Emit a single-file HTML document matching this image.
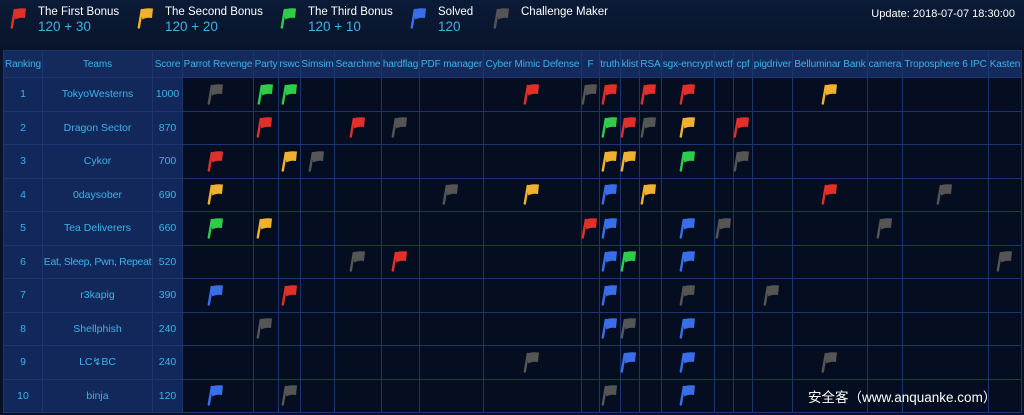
<!DOCTYPE html>
<html><head><meta charset="utf-8"><style>
*{margin:0;padding:0;box-sizing:border-box}
body{width:1024px;height:415px;overflow:hidden;background:linear-gradient(#0b1a36,#07142b 50px,#061128);font-family:"Liberation Sans","Noto Sans CJK SC",sans-serif;position:relative}
.leg{position:absolute;top:6px;color:#fff;font-size:11.5px}
.leg b{display:block;font-weight:normal;color:#3bb4ea;font-size:13.5px;margin-top:1px}
.leg svg{position:absolute;left:-30px;top:1px}
#upd{position:absolute;right:9px;top:8px;color:#fff;font-size:11px}
table{position:absolute;left:3px;top:50px;border-collapse:collapse;table-layout:fixed;width:1018px}
td{border:1px solid #1d3670;color:#3bb4ea;font-size:10.5px;text-align:center;height:33.5px;white-space:nowrap;overflow:hidden;background:#040e20;padding:0}
tr.h td{height:27px;background:#142a5c;font-size:10px;letter-spacing:-0.1px;overflow:visible}
td.l{background:#13285a;font-size:10.5px}
.f{position:absolute;width:20px;height:22px}
#wm{position:absolute;left:808px;top:386px;color:#fff;font-size:13.5px}
</style></head><body>
<svg width="0" height="0" style="position:absolute"><defs><symbol id="fl" viewBox="0 0 20 22"><path d="M3.8 20.5 L6.8 3" stroke="currentColor" stroke-width="2.4" stroke-linecap="round"/><path d="M5.5 2.8 Q11 0.5 18 1.5 L17 11 Q11.5 10 7.3 12.5 Z" fill="currentColor"/></symbol></defs></svg>
<div class="leg" style="left:38px"><svg width="20" height="22" style="color:#e0302a"><use href="#fl"/></svg>The First Bonus<b>120 + 30</b></div>
<div class="leg" style="left:165px"><svg width="20" height="22" style="color:#f0b030"><use href="#fl"/></svg>The Second Bonus<b>120 + 20</b></div>
<div class="leg" style="left:308px"><svg width="20" height="22" style="color:#2ecc4a"><use href="#fl"/></svg>The Third Bonus<b>120 + 10</b></div>
<div class="leg" style="left:438px"><svg width="20" height="22" style="color:#3a6ee8"><use href="#fl"/></svg>Solved<b>120</b></div>
<div class="leg" style="left:521px"><svg width="20" height="22" style="color:#555"><use href="#fl"/></svg>Challenge Maker</div>
<div id="upd">Update: 2018-07-07 18:30:00</div>
<table>
<colgroup><col style="width:39px"><col style="width:110px"><col style="width:30px"><col style="width:71px"><col style="width:25px"><col style="width:22px"><col style="width:34px"><col style="width:47px"><col style="width:38px"><col style="width:64px"><col style="width:98px"><col style="width:18px"><col style="width:21px"><col style="width:19px"><col style="width:22px"><col style="width:53px"><col style="width:19px"><col style="width:19px"><col style="width:40px"><col style="width:75px"><col style="width:35px"><col style="width:86px"><col style="width:33px"></colgroup>
<tr class="h"><td>Ranking</td><td>Teams</td><td>Score</td><td>Parrot Revenge</td><td>Party</td><td>rswc</td><td>Simsim</td><td>Searchme</td><td>hardflag</td><td>PDF manager</td><td>Cyber Mimic Defense</td><td>F</td><td>truth</td><td>klist</td><td>RSA</td><td>sgx-encrypt</td><td>wctf</td><td>cpf</td><td>pigdriver</td><td>Belluminar Bank</td><td>camera</td><td>Troposphere 6 IPC</td><td>Kasten</td></tr>
<tr><td class="l">1</td><td class="l">TokyoWesterns</td><td class="l">1000</td><td></td><td></td><td></td><td></td><td></td><td></td><td></td><td></td><td></td><td></td><td></td><td></td><td></td><td></td><td></td><td></td><td></td><td></td><td></td><td></td></tr>
<tr><td class="l">2</td><td class="l">Dragon Sector</td><td class="l">870</td><td></td><td></td><td></td><td></td><td></td><td></td><td></td><td></td><td></td><td></td><td></td><td></td><td></td><td></td><td></td><td></td><td></td><td></td><td></td><td></td></tr>
<tr><td class="l">3</td><td class="l">Cykor</td><td class="l">700</td><td></td><td></td><td></td><td></td><td></td><td></td><td></td><td></td><td></td><td></td><td></td><td></td><td></td><td></td><td></td><td></td><td></td><td></td><td></td><td></td></tr>
<tr><td class="l">4</td><td class="l">0daysober</td><td class="l">690</td><td></td><td></td><td></td><td></td><td></td><td></td><td></td><td></td><td></td><td></td><td></td><td></td><td></td><td></td><td></td><td></td><td></td><td></td><td></td><td></td></tr>
<tr><td class="l">5</td><td class="l">Tea Deliverers</td><td class="l">660</td><td></td><td></td><td></td><td></td><td></td><td></td><td></td><td></td><td></td><td></td><td></td><td></td><td></td><td></td><td></td><td></td><td></td><td></td><td></td><td></td></tr>
<tr><td class="l">6</td><td class="l" style="letter-spacing:-0.3px">Eat, Sleep, Pwn, Repeat</td><td class="l">520</td><td></td><td></td><td></td><td></td><td></td><td></td><td></td><td></td><td></td><td></td><td></td><td></td><td></td><td></td><td></td><td></td><td></td><td></td><td></td><td></td></tr>
<tr><td class="l">7</td><td class="l">r3kapig</td><td class="l">390</td><td></td><td></td><td></td><td></td><td></td><td></td><td></td><td></td><td></td><td></td><td></td><td></td><td></td><td></td><td></td><td></td><td></td><td></td><td></td><td></td></tr>
<tr><td class="l">8</td><td class="l">Shellphish</td><td class="l">240</td><td></td><td></td><td></td><td></td><td></td><td></td><td></td><td></td><td></td><td></td><td></td><td></td><td></td><td></td><td></td><td></td><td></td><td></td><td></td><td></td></tr>
<tr><td class="l">9</td><td class="l">LC↯BC</td><td class="l">240</td><td></td><td></td><td></td><td></td><td></td><td></td><td></td><td></td><td></td><td></td><td></td><td></td><td></td><td></td><td></td><td></td><td></td><td></td><td></td><td></td></tr>
<tr><td class="l">10</td><td class="l">binja</td><td class="l">120</td><td></td><td></td><td></td><td></td><td></td><td></td><td></td><td></td><td></td><td></td><td></td><td></td><td></td><td></td><td></td><td></td><td></td><td></td><td></td><td></td></tr>
</table>
<div id="flags"></div>
<div id="wm">安全客（www.anquanke.com）</div>
<script>
var C={r:"#e0302a",y:"#f0b030",g:"#2ecc4a",b:"#3a6ee8",k:"#555"};
var R=[
"k215 g265 g289 r531 k589 r609 r648 r687 y829",
"r264 r357 k399 g609 r628 k648 y687 r741",
"r215 y289 k316 y609 y628 g687 k741",
"y215 k450 y531 b609 y648 r829 k944",
"g215 y264 r589 b609 b687 k723 k884",
"k357 r399 b609 g628 b687 k1004",
"b215 r289 b609 k687 k771",
"k264 b609 k628 b687",
"k531 b628 b687 k829",
"b215 k289 k609 b687"];
var h="";
R.forEach(function(s,i){var cy=77+33.5*i+16.5;s.split(" ").forEach(function(t){var x=+t.slice(1);h+='<svg class="f" style="left:'+(x-10)+'px;top:'+(cy-11)+'px;color:'+C[t[0]]+'"><use href="#fl"/></svg>';});});
document.getElementById("flags").innerHTML=h;
</script>
</body></html>
